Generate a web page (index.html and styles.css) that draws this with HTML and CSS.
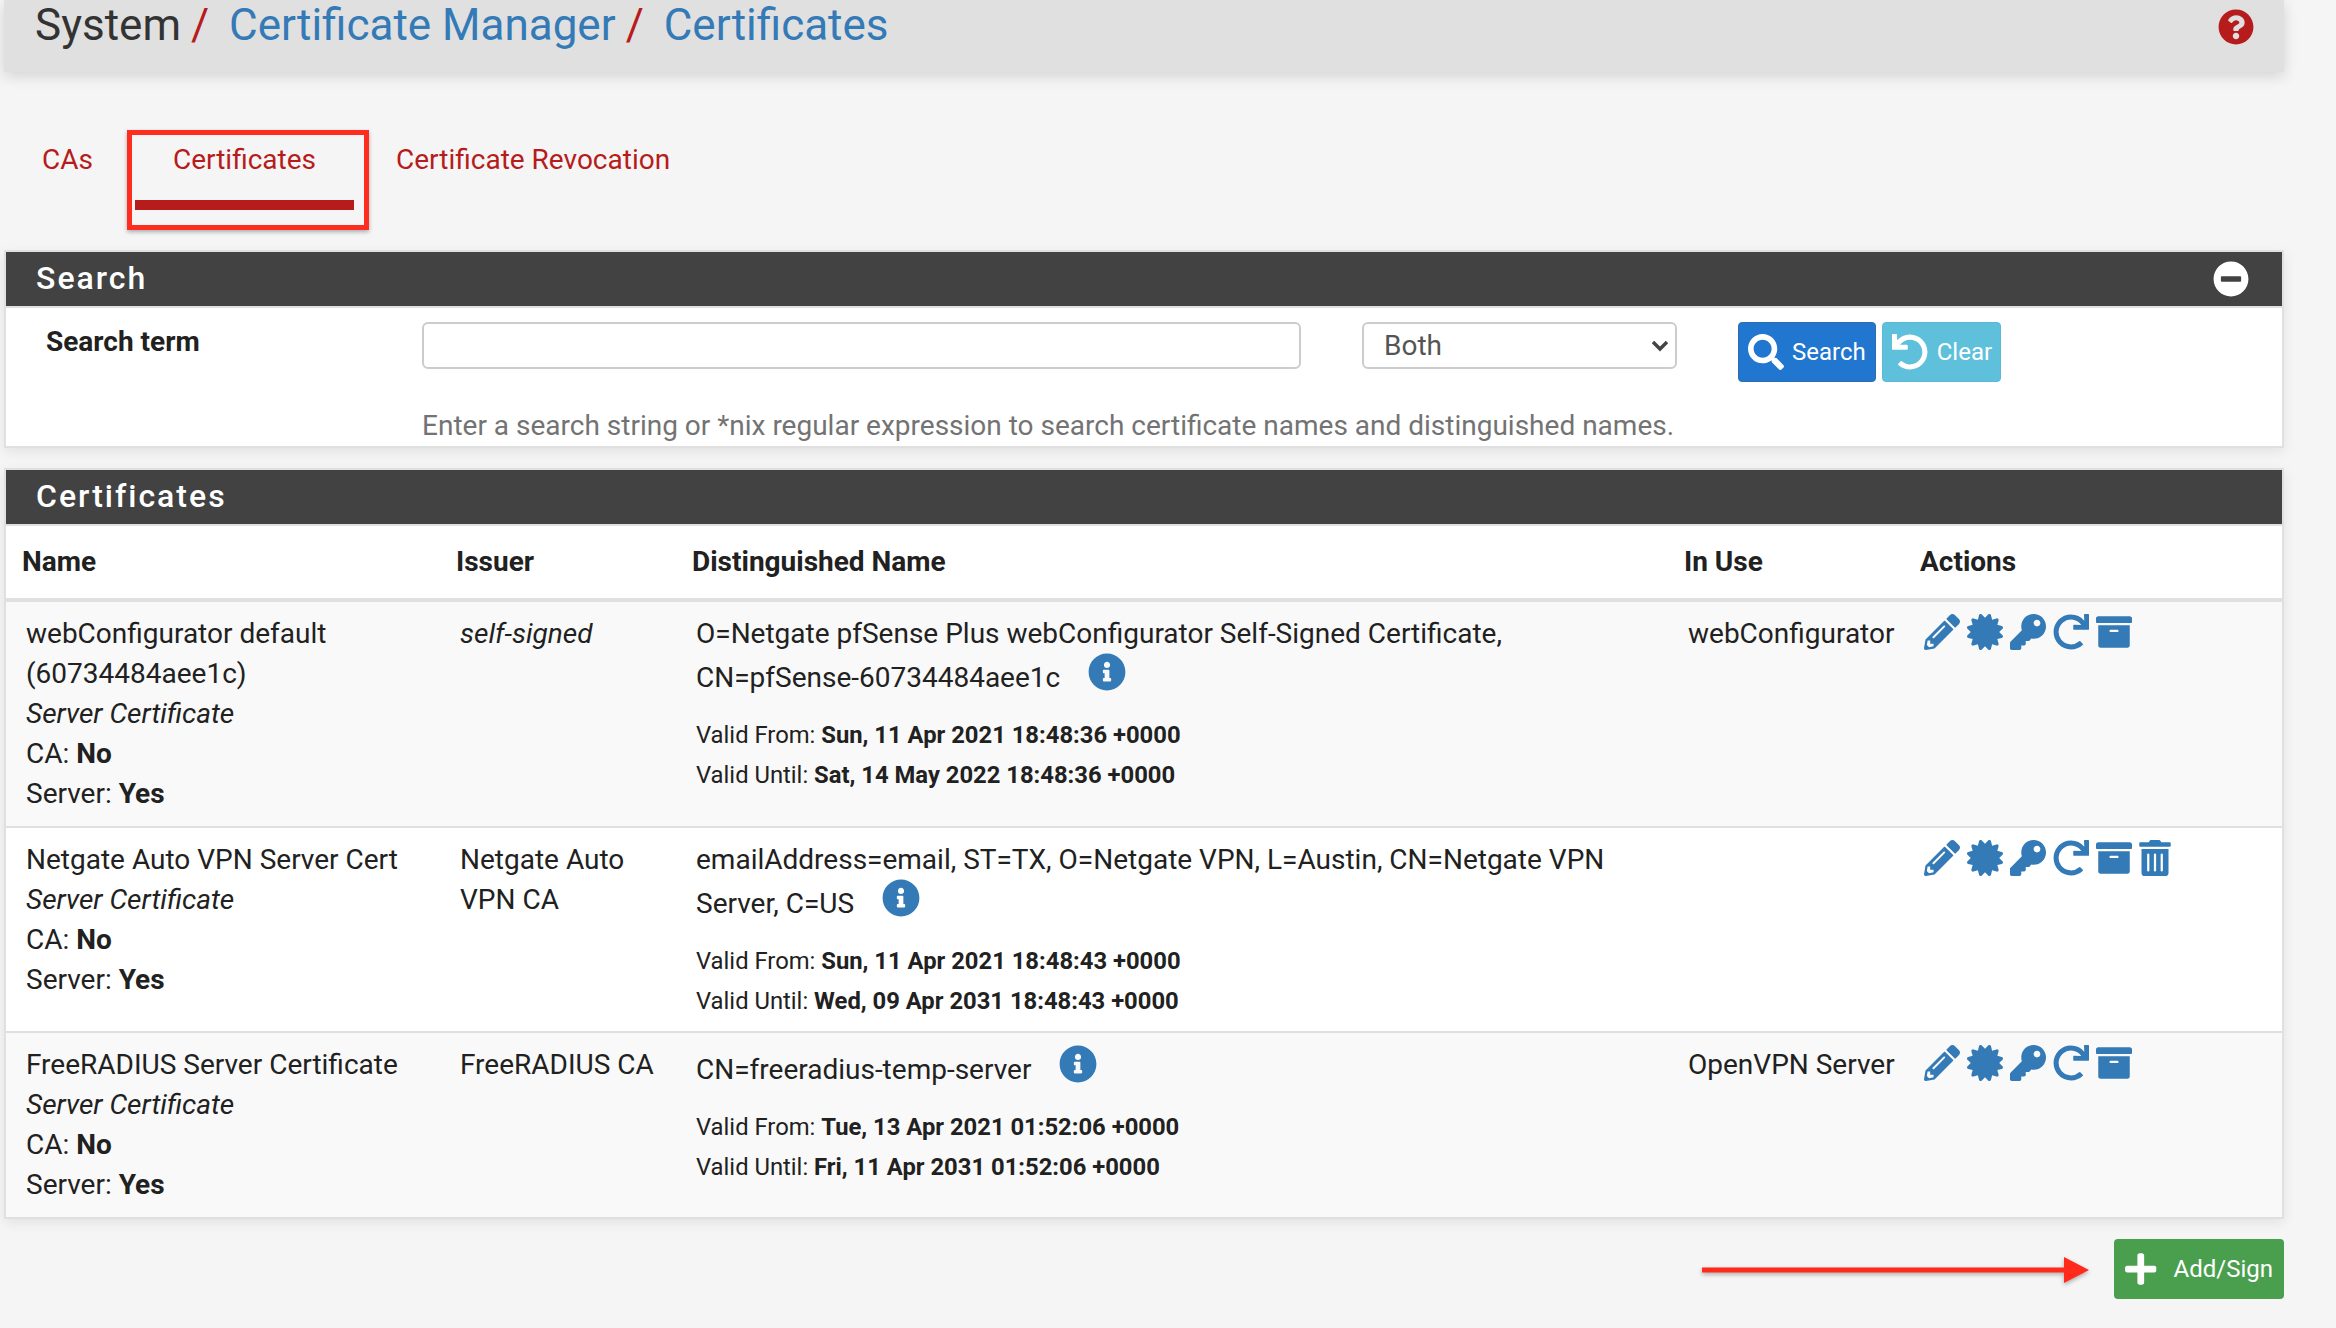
FILE: index.html
```html
<!DOCTYPE html>
<html lang="en">
<head>
    <meta charset="UTF-8">
    <title>System / Certificate Manager / Certificates</title>
    <link rel="stylesheet" href="styles.css">
</head>
<body>
    <svg class="defs" aria-hidden="true">
        <symbol id="i-pencil" viewBox="0 0 512 512"><path d="M497.9 142.1l-46.1 46.1c-4.7 4.7-12.3 4.7-17 0l-111-111c-4.7-4.7-4.7-12.3 0-17l46.1-46.1c18.7-18.7 49.1-18.7 67.9 0l60.1 60.1c18.8 18.7 18.8 49.1 0 68zM284.2 99.8L21.6 362.4.4 483.9c-2.9 16.4 11.4 30.6 27.8 27.8l121.5-21.3 262.6-262.6c4.7-4.7 4.7-12.3 0-17l-111-111c-4.8-4.7-12.4-4.7-17.1 0zM124.1 339.9c-5.5-5.5-5.5-14.3 0-19.8l154-154c5.5-5.5 14.3-5.5 19.8 0s5.5 14.3 0 19.8l-154 154c-5.5 5.5-14.3 5.5-19.8 0zM88 424h48v36.3l-64.5 11.3-31.1-31.1L51.7 376H88v48z"/></symbol>
        <symbol id="i-cert" viewBox="0 0 512 512"><path d="M458.622 255.92l45.985-45.005c13.708-12.977 7.316-36.039-10.664-40.339l-62.65-15.99 17.661-62.015c4.991-17.838-11.829-34.663-29.661-29.671l-61.994 17.667-15.984-62.671C337.085.197 313.765-6.276 300.99 7.228L256 53.57 211.011 7.229c-12.63-13.351-36.047-7.234-40.325 10.668l-15.984 62.671-61.995-17.667C74.87 57.907 58.056 74.738 63.046 92.572l17.661 62.015-62.65 15.99C.069 174.878-6.31 197.944 7.392 210.915l45.985 45.005-45.985 45.004c-13.708 12.977-7.316 36.039 10.664 40.339l62.65 15.99-17.661 62.015c-4.991 17.838 11.829 34.663 29.661 29.671l61.994-17.667 15.984 62.671c4.439 18.575 27.696 24.018 40.325 10.668L256 458.61l44.989 46.001c12.5 13.488 35.987 7.486 40.325-10.668l15.984-62.671 61.994 17.667c17.836 4.994 34.651-11.837 29.661-29.671l-17.661-62.015 62.65-15.99c17.987-4.302 24.366-27.367 10.664-40.339l-45.984-45.004z"/></symbol>
        <symbol id="i-key" viewBox="0 0 512 512"><path d="M512 176.001C512 273.203 433.202 352 336 352c-11.22 0-22.19-1.062-32.827-3.069l-24.012 27.014A23.999 23.999 0 0 1 261.223 384H224v40c0 13.255-10.745 24-24 24h-40v40c0 13.255-10.745 24-24 24H24c-13.255 0-24-10.745-24-24v-78.059c0-6.365 2.529-12.47 7.029-16.971l161.802-161.802C163.108 213.814 160 195.271 160 176 160 78.798 238.797.001 335.999 0 433.488-.001 512 78.511 512 176.001zM336 128c0 26.51 21.49 48 48 48s48-21.49 48-48-21.49-48-48-48-48 21.49-48 48z"/></symbol>
        <symbol id="i-redo" viewBox="0 0 512 512"><path d="M500.33 0h-47.41a12 12 0 0 0-12 12.57l4 82.76A247.42 247.42 0 0 0 256 8C119.34 8 7.9 119.53 8 256.19 8.1 393.07 119.1 504 256 504a247.1 247.1 0 0 0 166.18-63.91 12 12 0 0 0 .48-17.43l-34-34a12 12 0 0 0-16.38-.55A176 176 0 1 1 402.1 157.8l-101.53-4.87a12 12 0 0 0-12.57 12v47.41a12 12 0 0 0 12 12h200.33a12 12 0 0 0 12-12V12a12 12 0 0 0-12-12z"/></symbol>
        <symbol id="i-archive" viewBox="0 0 512 512"><path d="M32 448c0 17.7 14.3 32 32 32h384c17.7 0 32-14.3 32-32V160H32v288zm160-212c0-6.6 5.4-12 12-12h104c6.6 0 12 5.4 12 12v8c0 6.6-5.4 12-12 12H204c-6.6 0-12-5.4-12-12v-8zM480 32H32C14.3 32 0 46.3 0 64v48c0 8.8 7.2 16 16 16h480c8.8 0 16-7.2 16-16V64c0-17.7-14.3-32-32-32z"/></symbol>
        <symbol id="i-trash" viewBox="0 0 448 512"><path d="M32 464a48 48 0 0 0 48 48h288a48 48 0 0 0 48-48V128H32zm272-256a16 16 0 0 1 32 0v224a16 16 0 0 1-32 0zm-96 0a16 16 0 0 1 32 0v224a16 16 0 0 1-32 0zm-96 0a16 16 0 0 1 32 0v224a16 16 0 0 1-32 0zM432 32H312l-9.4-18.7A24 24 0 0 0 281.1 0H166.8a23.72 23.72 0 0 0-21.4 13.3L136 32H16A16 16 0 0 0 0 48v32a16 16 0 0 0 16 16h416a16 16 0 0 0 16-16V48a16 16 0 0 0-16-16z"/></symbol>
        <symbol id="i-info" viewBox="0 0 512 512"><path d="M256 8C119.043 8 8 119.083 8 256c0 136.997 111.043 248 248 248s248-111.003 248-248C504 119.083 392.957 8 256 8zm0 110c23.196 0 42 18.804 42 42s-18.804 42-42 42-42-18.804-42-42 18.804-42 42-42zm56 254c0 6.627-5.373 12-12 12h-88c-6.627 0-12-5.373-12-12v-24c0-6.627 5.373-12 12-12h12v-64h-12c-6.627 0-12-5.373-12-12v-24c0-6.627 5.373-12 12-12h64c6.627 0 12 5.373 12 12v100h12c6.627 0 12 5.373 12 12v24z"/></symbol>
        <symbol id="i-help" viewBox="0 0 512 512"><path d="M504 256c0 136.997-111.043 248-248 248S8 392.997 8 256C8 119.083 119.043 8 256 8s248 111.083 248 248zM262.655 90c-54.497 0-89.255 22.957-116.549 63.758-3.536 5.286-2.353 12.415 2.715 16.258l34.699 26.31c5.205 3.947 12.621 3.008 16.665-2.122 17.864-22.658 30.113-35.797 57.303-35.797 20.429 0 45.698 13.148 45.698 32.958 0 14.976-12.363 22.667-32.534 33.976C247.128 238.528 216 254.941 216 296v4c0 6.627 5.373 12 12 12h56c6.627 0 12-5.373 12-12v-1.333c0-28.462 83.186-29.647 83.186-106.667 0-58.002-60.165-102-116.531-102zM256 338c-25.365 0-46 20.635-46 46 0 25.364 20.635 46 46 46s46-20.636 46-46c0-25.365-20.635-46-46-46z"/></symbol>
        <symbol id="i-minus" viewBox="0 0 512 512"><path d="M256 8C119 8 8 119 8 256s111 248 248 248 248-111 248-248S393 8 256 8zM124 296c-6.6 0-12-5.4-12-12v-56c0-6.6 5.4-12 12-12h264c6.6 0 12 5.4 12 12v56c0 6.6-5.4 12-12 12H124z"/></symbol>
        <symbol id="i-search" viewBox="0 0 512 512"><path d="M505 442.7L405.3 343c-4.5-4.5-10.6-7-17-7H372c27.6-35.3 44-79.7 44-128C416 93.1 322.9 0 208 0S0 93.1 0 208s93.1 208 208 208c48.3 0 92.7-16.4 128-44v16.3c0 6.4 2.5 12.5 7 17l99.7 99.7c9.4 9.4 24.6 9.4 33.9 0l28.3-28.3c9.4-9.4 9.4-24.6.1-34zM208 336c-70.7 0-128-57.2-128-128 0-70.7 57.2-128 128-128 70.7 0 128 57.2 128 128 0 70.7-57.2 128-128 128z"/></symbol>
        <symbol id="i-undo" viewBox="0 0 512 512"><path d="M212.333 224.333H12c-6.627 0-12-5.373-12-12V12C0 5.373 5.373 0 12 0h48c6.627 0 12 5.373 12 12v78.112C117.773 39.279 184.26 7.47 258.175 8.007c136.906.994 246.448 111.623 246.157 248.532C504.041 393.258 393.12 504 256.333 504c-64.089 0-122.496-24.313-166.51-64.215-5.099-4.622-5.334-12.554-.467-17.42l33.967-33.967c4.474-4.474 11.662-4.717 16.401-.525C170.76 415.336 211.58 432 256.333 432c97.268 0 176-78.716 176-176 0-97.267-78.716-176-176-176-58.496 0-110.28 28.476-142.274 72.333h98.274c6.627 0 12 5.373 12 12v48c0 6.627-5.373 12-12 12z"/></symbol>
        <symbol id="i-plus" viewBox="0 0 448 512"><path d="M416 208H272V64c0-17.67-14.33-32-32-32h-32c-17.67 0-32 14.33-32 32v144H32c-17.67 0-32 14.33-32 32v32c0 17.67 14.33 32 32 32h144v144c0 17.67 14.33 32 32 32h32c17.67 0 32-14.33 32-32V304h144c17.67 0 32-14.33 32-32v-32c0-17.67-14.33-32-32-32z"/></symbol>
    </svg>

    <div class="page">
        <header class="topbar">
            <h1 class="crumbs">
                <span>System</span><span class="sep">/</span>
                <a href="#">Certificate Manager</a><span class="sep">/</span>
                <a href="#">Certificates</a>
            </h1>
            <svg class="help-icon"><use href="#i-help"/></svg>
        </header>

        <nav class="tabs">
            <a class="tab" href="#">CAs</a>
            <a class="tab active" href="#">Certificates</a>
            <a class="tab" href="#">Certificate Revocation</a>
        </nav>

        <section class="panel">
            <div class="panel-head">
                <h2>Search</h2>
                <svg class="collapse-icon"><use href="#i-minus"/></svg>
            </div>
            <div class="search-body">
                <div class="search-row">
                    <label class="search-label" for="term">Search term</label>
                    <input class="search-input" id="term" type="text">
                    <div class="select-wrap">
                        <select class="search-select">
                            <option>Both</option>
                        </select>
                        <svg class="chevron" viewBox="0 0 18 12"><path d="M2 2l7 7 7-7" fill="none" stroke="#444" stroke-width="3.4"/></svg>
                    </div>
                    <div class="search-btns">
                        <button class="btn btn-blue" type="button"><svg class="btn-icon"><use href="#i-search"/></svg>Search</button>
                        <button class="btn btn-cyan" type="button"><svg class="btn-icon"><use href="#i-undo"/></svg>Clear</button>
                    </div>
                </div>
                <p class="search-help">Enter a search string or *nix regular expression to search certificate names and distinguished names.</p>
            </div>
        </section>

        <section class="panel panel-certs">
            <div class="panel-head">
                <h2>Certificates</h2>
            </div>
            <table class="cert-table">
                <colgroup>
                    <col class="col-name">
                    <col class="col-issuer">
                    <col class="col-dn">
                    <col class="col-use">
                    <col>
                </colgroup>
                <thead>
                    <tr>
                        <th>Name</th>
                        <th>Issuer</th>
                        <th>Distinguished Name</th>
                        <th>In Use</th>
                        <th>Actions</th>
                    </tr>
                </thead>
                <tbody>
                    <tr>
                        <td>webConfigurator default<br>(60734484aee1c)<br><i>Server Certificate</i><br>CA: <b>No</b><br>Server: <b>Yes</b></td>
                        <td><i>self-signed</i></td>
                        <td>
                            <div class="dn">O=Netgate pfSense Plus webConfigurator Self-Signed Certificate,<br>CN=pfSense-60734484aee1c<svg class="info-icon"><use href="#i-info"/></svg></div>
                            <div class="valid">Valid From: <b>Sun, 11 Apr 2021 18:48:36 +0000</b><br>Valid Until: <b>Sat, 14 May 2022 18:48:36 +0000</b></div>
                        </td>
                        <td>webConfigurator</td>
                        <td>
                            <div class="actions">
                                <svg><use href="#i-pencil"/></svg>
                                <svg><use href="#i-cert"/></svg>
                                <svg><use href="#i-key"/></svg>
                                <svg><use href="#i-redo"/></svg>
                                <svg><use href="#i-archive"/></svg>
                            </div>
                        </td>
                    </tr>
                    <tr>
                        <td>Netgate Auto VPN Server Cert<br><i>Server Certificate</i><br>CA: <b>No</b><br>Server: <b>Yes</b></td>
                        <td>Netgate Auto<br>VPN CA</td>
                        <td>
                            <div class="dn">emailAddress=email, ST=TX, O=Netgate VPN, L=Austin, CN=Netgate VPN<br>Server, C=US<svg class="info-icon"><use href="#i-info"/></svg></div>
                            <div class="valid">Valid From: <b>Sun, 11 Apr 2021 18:48:43 +0000</b><br>Valid Until: <b>Wed, 09 Apr 2031 18:48:43 +0000</b></div>
                        </td>
                        <td></td>
                        <td>
                            <div class="actions">
                                <svg><use href="#i-pencil"/></svg>
                                <svg><use href="#i-cert"/></svg>
                                <svg><use href="#i-key"/></svg>
                                <svg><use href="#i-redo"/></svg>
                                <svg><use href="#i-archive"/></svg>
                                <svg class="trash"><use href="#i-trash"/></svg>
                            </div>
                        </td>
                    </tr>
                    <tr>
                        <td>FreeRADIUS Server Certificate<br><i>Server Certificate</i><br>CA: <b>No</b><br>Server: <b>Yes</b></td>
                        <td>FreeRADIUS CA</td>
                        <td>
                            <div class="dn dn-single">CN=freeradius-temp-server<svg class="info-icon"><use href="#i-info"/></svg></div>
                            <div class="valid">Valid From: <b>Tue, 13 Apr 2021 01:52:06 +0000</b><br>Valid Until: <b>Fri, 11 Apr 2031 01:52:06 +0000</b></div>
                        </td>
                        <td>OpenVPN Server</td>
                        <td>
                            <div class="actions">
                                <svg><use href="#i-pencil"/></svg>
                                <svg><use href="#i-cert"/></svg>
                                <svg><use href="#i-key"/></svg>
                                <svg><use href="#i-redo"/></svg>
                                <svg><use href="#i-archive"/></svg>
                            </div>
                        </td>
                    </tr>
                </tbody>
            </table>
        </section>

        <div class="page-actions">
            <button class="btn btn-green" type="button"><svg class="btn-icon plus"><use href="#i-plus"/></svg>Add/Sign</button>
        </div>

        <!-- red markup drawn over the screenshot -->
        <div class="mark-box"></div>
        <svg class="mark-arrow" viewBox="0 0 388 28">
            <path d="M0 14h364" stroke="#ff2a1c" stroke-width="5"/>
            <path d="M362 1l25 13-25 13z" fill="#ff2a1c"/>
        </svg>
    </div>
</body>
</html>
```

FILE: styles.css
```css
html, body {
    margin: 0;
    height: 1328px;
    overflow: hidden;
}

body {
    background-color: #f5f5f5;
    color: #212121;
    font-family: Roboto, "Liberation Sans", sans-serif;
    font-size: 28px;
    line-height: 40px;
}

a {
    text-decoration: none;
}

.defs {
    display: none;
}

.page {
    position: relative;
    width: 2280px;
    margin-left: 4px;
}

/* top bar */
.topbar {
    display: flex;
    justify-content: space-between;
    height: 72px;
    padding: 0 30px 0 31px;
    box-sizing: border-box;
    background-color: #e0e0e0;
    box-shadow: 0 4px 14px rgba(0, 0, 0, 0.14);
}

.crumbs {
    margin: 0;
    font-size: 44px;
    font-weight: 400;
    line-height: 50px;
    color: #333;
}

.crumbs a {
    color: #337ab7;
}

.crumbs .sep {
    margin: 0 9px 0 10px;
    color: #b71c1c;
}

.help-icon {
    width: 36px;
    height: 36px;
    margin-top: 9px;
    fill: #b71c1c;
}

/* tabs */
.tabs {
    display: flex;
    gap: 4px;
    margin-top: 68px;
}

.tab {
    padding: 0 38px 20px;
    border-bottom: 10px solid transparent;
    color: #b71c1c;
}

.tab.active {
    border-bottom-color: #b71c1c;
}

/* panels */
.panel {
    margin-top: 40px;
    border: 2px solid #e0e0e0;
    background-color: #fff;
    box-shadow: 0 4px 12px rgba(0, 0, 0, 0.08);
}

.panel-certs {
    margin-top: 20px;
}

.panel-head {
    display: flex;
    justify-content: space-between;
    align-items: center;
    height: 54px;
    padding: 0 33px 0 30px;
    background-color: #424242;
    color: #fff;
}

.panel-head h2 {
    margin: 0 0 2px;
    font-size: 32px;
    font-weight: 500;
    letter-spacing: 2px;
}

.collapse-icon {
    width: 36px;
    height: 36px;
    fill: #fff;
}

/* search form */
.search-body {
    border-top: 2px solid #e0e0e0;
}

.search-row {
    display: flex;
    align-items: flex-start;
    padding: 14px 0 0 40px;
}

.search-label {
    width: 376px;
    font-weight: 700;
}

.search-input,
.search-select {
    box-sizing: border-box;
    height: 47px;
    border: 2px solid #ccc;
    border-radius: 6px;
    background-color: #fff;
    font-family: inherit;
    font-size: 28px;
    color: #555;
}

.search-input {
    width: 879px;
}

.select-wrap {
    position: relative;
    width: 315px;
    margin-left: 61px;
}

.search-select {
    width: 100%;
    padding-left: 20px;
    appearance: none;
}

.chevron {
    position: absolute;
    right: 8px;
    top: 18px;
    width: 18px;
    height: 12px;
}

.search-btns {
    display: flex;
    gap: 6px;
    margin-left: 61px;
}

.search-help {
    margin: 24px 0 0;
    padding-left: 416px;
    color: #737373;
}

/* buttons */
.btn {
    display: flex;
    align-items: center;
    height: 60px;
    padding: 0 9px;
    border: 1px solid transparent;
    border-radius: 4px;
    color: #fff;
    font-family: inherit;
    font-size: 24px;
}

.btn-icon {
    width: 36px;
    height: 36px;
    margin-right: 8px;
    fill: #fff;
}

.btn-blue {
    background-color: #2177d0;
    border-color: #2a6eb0;
}

.btn-cyan {
    padding-right: 8px;
    background-color: #5fc0dc;
    border-color: #5bb8d8;
}

.btn-cyan .btn-icon {
    margin-right: 9px;
}

.btn-green {
    width: 170px;
    padding: 0 10px;
    background-color: #4a9f4e;
    white-space: nowrap;
}

.btn-icon.plus {
    width: 32px;
    height: 36px;
    margin-right: 17px;
}

/* table */
.cert-table {
    width: 100%;
    border-collapse: collapse;
    table-layout: fixed;
    border-top: 2px solid #e0e0e0;
}

.col-name {
    width: 434px;
}

.col-issuer {
    width: 236px;
}

.col-dn {
    width: 992px;
}

.col-use {
    width: 236px;
}

.cert-table th {
    height: 72px;
    padding: 0 0 0 16px;
    border-bottom: 4px solid #e0e0e0;
    font-weight: 700;
    text-align: left;
}

.cert-table td {
    padding: 12px 0 12px 20px;
    vertical-align: top;
}

.cert-table tbody tr {
    border-top: 2px solid #e0e0e0;
}

.cert-table tbody tr:first-child {
    border-top: 0;
}

.cert-table tbody tr:nth-child(2) td {
    padding-bottom: 10px;
}

.cert-table tbody tr:nth-child(odd) {
    background-color: #f9f9f9;
}

.dn {
    margin-top: -2px;
    line-height: 44px;
}

.dn-single {
    margin-top: 3px;
}

/* negative margins so the icon does not stretch its line */
.info-icon {
    width: 38px;
    height: 38px;
    margin: -10px 0 -10px 28px;
    vertical-align: 6px;
    fill: #337ab7;
}

.valid {
    margin-top: 15px;
    font-size: 23.8px;
}

.actions {
    display: flex;
    gap: 7px;
}

.actions svg {
    width: 36px;
    height: 36px;
    fill: #337ab7;
}

.actions .trash {
    width: 32px;
}

.page-actions {
    display: flex;
    justify-content: flex-end;
    margin-top: 20px;
}

/* markup */
.mark-box {
    position: absolute;
    left: 123px;
    top: 130px;
    width: 242px;
    height: 100px;
    box-sizing: border-box;
    border: 5px solid #ff2d20;
    box-shadow: 0 2px 4px rgba(0, 0, 0, 0.3);
}

.mark-arrow {
    position: absolute;
    left: 1698px;
    top: 1256px;
    width: 388px;
    height: 28px;
    filter: drop-shadow(0 2px 2px rgba(0, 0, 0, 0.3));
}
```
